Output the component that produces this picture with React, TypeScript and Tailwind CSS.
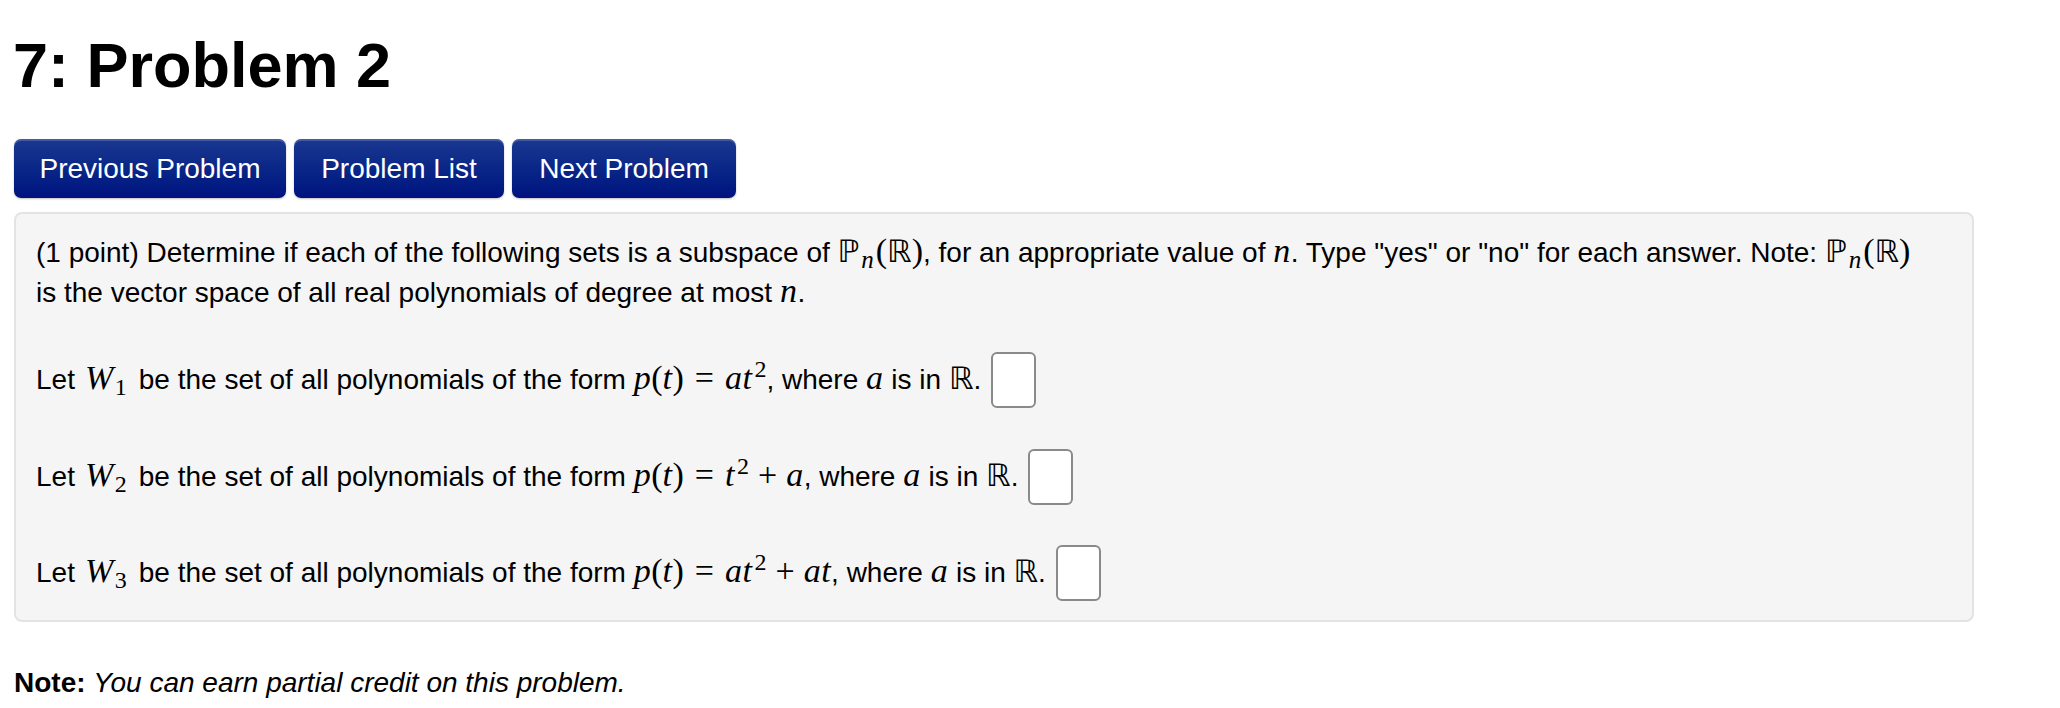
import React from "react";

const M = ({ children }: { children: React.ReactNode }) => (
  <span className="font-['Liberation_Serif','DejaVu_Serif',serif] italic text-[34px] leading-[1] tracking-[0.5px]">{children}</span>
);
const R = ({ children }: { children: React.ReactNode }) => (
  <span className="font-['Liberation_Serif','DejaVu_Serif',serif] not-italic text-[34px] leading-[1]">{children}</span>
);
const BB = ({ children }: { children: React.ReactNode }) => (
  <span className="font-['DejaVu_Sans',sans-serif] not-italic text-[31px] font-normal leading-[1]">{children}</span>
);

const Pn = () => (
  <span className="whitespace-nowrap">
    <BB>ℙ</BB>
    <sub className="font-['Liberation_Serif',serif] italic text-[25px] ml-[2px] mr-[2px]">n</sub>
    <R>(</R>
    <BB>ℝ</BB>
    <R>)</R>
  </span>
);

const W = ({ i }: { i: string }) => (
  <span className="ml-[10px] mr-[12px]">
    <M>W</M>
    <sub className="font-['Liberation_Serif',serif] not-italic text-[24px] ml-[1px]">{i}</sub>
  </span>
);

const Eq = () => <R><span className="mx-[11px]">=</span></R>;
const Plus = () => <R><span className="mx-[9px]">+</span></R>;
const Sq = () => (
  <sup className="font-['Liberation_Serif',serif] not-italic text-[24px] ml-[2px]">2</sup>
);

const Box = () => (
  <input
    type="text"
    className="ml-[10px] w-[45px] h-[56px] rounded-[6px] border-2 border-[#8a8a8a] bg-white shrink-0 outline-none"
  />
);

export default function App() {
  return (
    <div className="min-h-[708px] bg-white text-black font-['Liberation_Sans',Arial,sans-serif]">
      <div className="pl-[13px] pr-[87px]">
        <h1 className="pt-[31px] text-[63px] leading-[68px] font-bold">7: Problem 2</h1>

        <div className="mt-[40px] flex gap-[8px] pl-[1px]">
          {[
            ["Previous Problem", "w-[272px]"],
            ["Problem List", "w-[210px]"],
            ["Next Problem", "w-[224px]"],
          ].map(([t, w]) => (
            <button
              key={t}
              className={`${w} h-[59px] flex items-center justify-center rounded-[7px] text-white text-[28px] leading-[40px] bg-gradient-to-b from-[#1a3790] to-[#00117f] shadow-[inset_0_2px_0_rgba(255,255,255,0.18),0_1px_2px_rgba(0,0,0,0.25)]`}
            >
              {t}
            </button>
          ))}
        </div>

        <div className="mt-[14px] ml-[1px] w-[1960px] rounded-[8px] border-2 border-[#e3e3e3] bg-[#f5f5f5] pl-[20px] pr-[20px] pt-[19px] pb-[19px] text-[28px] leading-[40px]">
          <div className="whitespace-nowrap h-[40px]">
            (1 point) Determine if each of the following sets is a subspace of <Pn />, for an appropriate value of <M>n</M>. Type "yes" or "no" for each answer. Note: <Pn />
          </div>
          <div className="h-[40px]">
            is the vector space of all real polynomials of degree at most <M>n</M>.
          </div>

          <div className="mt-[39px] flex items-center h-[56px] whitespace-nowrap">
            <span>
              Let<W i="1" />be the set of all polynomials of the form <M>p</M><R>(</R><M>t</M><R>)</R><Eq /><M>at</M><Sq />, where <M>a</M> is in <BB>ℝ</BB>.
            </span>
            <Box />
          </div>

          <div className="mt-[41px] flex items-center h-[56px] whitespace-nowrap">
            <span>
              Let<W i="2" />be the set of all polynomials of the form <M>p</M><R>(</R><M>t</M><R>)</R><Eq /><M>t</M><Sq /><Plus /><M>a</M>, where <M>a</M> is in <BB>ℝ</BB>.
            </span>
            <Box />
          </div>

          <div className="mt-[40px] flex items-center h-[56px] whitespace-nowrap">
            <span>
              Let<W i="3" />be the set of all polynomials of the form <M>p</M><R>(</R><M>t</M><R>)</R><Eq /><M>at</M><Sq /><Plus /><M>at</M>, where <M>a</M> is in <BB>ℝ</BB>.
            </span>
            <Box />
          </div>
        </div>

        <p className="mt-[41px] ml-[1px] text-[28px] leading-[40px]">
          <b>Note:</b> <i>You can earn partial credit on this problem.</i>
        </p>
      </div>
    </div>
  );
}
